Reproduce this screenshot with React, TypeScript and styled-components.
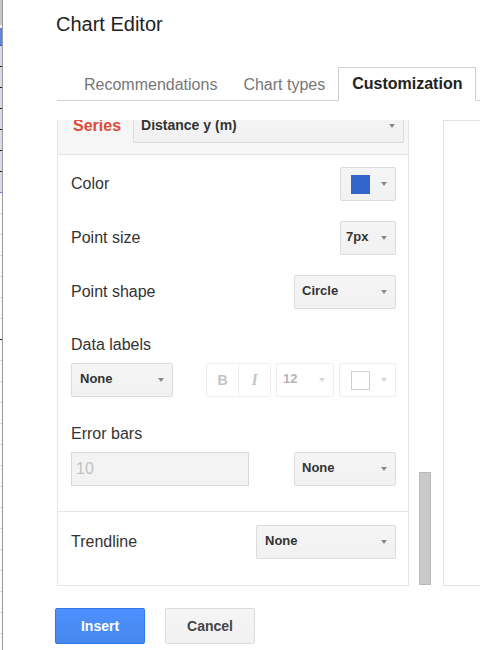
import React from "react";
import styled, { createGlobalStyle } from "styled-components";

const GlobalStyle = createGlobalStyle`
  *, *::before, *::after { box-sizing: border-box; }
  html, body { margin: 0; padding: 0; background: #fff; overflow: hidden; }
  body { font-family: "Liberation Sans", Arial, sans-serif; }
`;

const Page = styled.div`
  display: flex;
  width: 480px;
  height: 650px;
  overflow: hidden;
`;

/* sliver of the spreadsheet behind the dialog */
const Sheet = styled.div`
  width: 3px;
  flex-shrink: 0;
  display: flex;
  flex-direction: column;
  border-right: 1px solid #9c9c9c;
  overflow: hidden;
`;

const SheetCell = styled.div<{ $h: number; $bg: string; $line?: string }>`
  flex-shrink: 0;
  height: ${(p) => p.$h}px;
  background: ${(p) => p.$bg};
  border-bottom: 1px solid ${(p) => p.$line ?? p.$bg};
`;

const Dialog = styled.div`
  flex: 1;
  min-width: 0;
  display: flex;
  flex-direction: column;
  padding-left: 52px;
  overflow: hidden;
`;

const Title = styled.h1`
  margin: 0;
  padding: 12px 0 0 1px;
  font-size: 20px;
  line-height: 24px;
  font-weight: normal;
  color: #222;
`;

const TabBar = styled.div`
  display: flex;
  height: 34px;
  margin: 31px 0 0 2px;
  padding-left: 14px;
  border-bottom: 1px solid #cfcfcf;
`;

const Tab = styled.div<{ $active?: boolean }>`
  display: flex;
  align-items: center;
  height: 34px;
  padding: 0 ${(p) => (p.$active ? "13px" : "12px")};
  font-size: 16px;
  white-space: nowrap;
  border: 1px solid ${(p) => (p.$active ? "#cfcfcf" : "transparent")};
  border-bottom: ${(p) => (p.$active ? "1px solid #fff" : "none")};
  background: ${(p) => (p.$active ? "#fff" : "transparent")};
  color: ${(p) => (p.$active ? "#222" : "#777")};
  font-weight: ${(p) => (p.$active ? "bold" : "normal")};
`;

const Workspace = styled.div`
  display: flex;
  height: 466px;
  margin: 19px 0 0 2px;
`;

const ScrollViewport = styled.div`
  width: 352px;
  flex-shrink: 0;
  height: 466px;
  overflow: hidden;
`;

const ScrollContent = styled.div<{ $offset: number }>`
  margin-top: ${(p) => -p.$offset}px;
`;

const SeriesHeader = styled.div`
  display: flex;
  align-items: center;
  gap: 12px;
  padding: 12px 4px 11px 15px;
  background: #f6f6f6;
  border-left: 1px solid #e5e5e5;
  border-right: 1px solid #e5e5e5;
`;

const SeriesLabel = styled.span`
  font-size: 16px;
  font-weight: bold;
  color: #dd4b39;
`;

const SettingsPanel = styled.div`
  border: 1px solid #e5e5e5;
  background: #fff;
`;

const Section = styled.div<{ $divider?: boolean }>`
  display: flex;
  flex-direction: column;
  padding: ${(p) => (p.$divider ? "12px 12px 25px 13px" : "13px 12px 26px 13px")};
  border-bottom: ${(p) => (p.$divider ? "1px solid #e5e5e5" : "none")};
`;

const Row = styled.div<{ $gap?: number }>`
  display: flex;
  align-items: center;
  justify-content: space-between;
  margin-top: ${(p) => p.$gap ?? 0}px;
`;

const Label = styled.div<{ $gap?: number }>`
  font-size: 16px;
  line-height: 18px;
  color: #333;
  margin-top: ${(p) => p.$gap ?? 0}px;
`;

const Select = styled.div<{ $w?: number; $pl?: number; $size?: number }>`
  display: flex;
  align-items: center;
  justify-content: space-between;
  width: ${(p) => (p.$w ? `${p.$w}px` : "auto")};
  flex: ${(p) => (p.$w ? "0 0 auto" : "1")};
  height: 34px;
  padding: 0 8px 0 ${(p) => p.$pl ?? 7}px;
  background: linear-gradient(#f5f5f5, #f1f1f1);
  border: 1px solid #dcdcdc;
  border-radius: 2px;
  font-size: ${(p) => p.$size ?? 13}px;
  font-weight: bold;
  color: #333;
`;

const SelectText = styled.span`
  margin-top: -3px;
  white-space: nowrap;
`;

const Caret = styled.span<{ $muted?: boolean }>`
  width: 0;
  height: 0;
  border-left: 3.5px solid transparent;
  border-right: 3.5px solid transparent;
  border-top: 4px solid ${(p) => (p.$muted ? "#d6d6d6" : "#8a8a8a")};
`;

const Swatch = styled.span<{ $color: string; $outline?: boolean }>`
  width: 19px;
  height: 19px;
  margin-left: 3px;
  background: ${(p) => p.$color};
  border: ${(p) => (p.$outline ? "1px solid #cfcfcf" : "none")};
`;

const Tools = styled.div`
  display: flex;
  gap: 5px;
`;

const ToggleGroup = styled.div`
  display: flex;
  width: 65px;
  height: 34px;
  border: 1px solid #f0f0f0;
  border-radius: 2px;
`;

const Toggle = styled.span<{ $italic?: boolean }>`
  flex: 1;
  display: flex;
  align-items: center;
  justify-content: center;
  color: #c4c4c4;
  font-weight: bold;
  font-size: ${(p) => (p.$italic ? 16 : 14)}px;
  font-style: ${(p) => (p.$italic ? "italic" : "normal")};
  font-family: ${(p) =>
    p.$italic ? '"Liberation Serif", "Times New Roman", serif' : "inherit"};
  & + & {
    border-left: 1px solid #f0f0f0;
  }
`;

const MutedSelect = styled(Select)`
  background: #fff;
  border-color: #eeeeee;
  color: #b4b4b4;
  font-weight: bold;
`;

const TextInput = styled.div`
  display: flex;
  align-items: center;
  width: 178px;
  height: 34px;
  padding-left: 4px;
  background: #f3f3f3;
  border: 1px solid #d9d9d9;
  font-size: 16px;
  color: #c2c2c2;
`;

const ScrollTrack = styled.div`
  width: 34px;
  flex-shrink: 0;
  display: flex;
  flex-direction: column;
  justify-content: flex-end;
  padding: 0 0 1px 10px;
`;

const ScrollThumb = styled.div`
  width: 12px;
  height: 113px;
  background: #c9c9c9;
  border: 1px solid #b9b9b9;
`;

const Preview = styled.div`
  width: 300px;
  flex-shrink: 0;
  height: 466px;
  border: 1px solid #e2e2e2;
`;

const Footer = styled.div`
  display: flex;
  gap: 20px;
  margin-top: 22px;
`;

const Button = styled.button<{ $primary?: boolean }>`
  width: 90px;
  height: 36px;
  font-family: inherit;
  font-size: 14px;
  font-weight: bold;
  border-radius: 2px;
  padding: 0;
  color: ${(p) => (p.$primary ? "#fff" : "#444")};
  background: ${(p) =>
    p.$primary
      ? "linear-gradient(#4d90fe, #4787ed)"
      : "linear-gradient(#f5f5f5, #f1f1f1)"};
  border: 1px solid ${(p) => (p.$primary ? "#3079ed" : "#dcdcdc")};
`;

const sheetRows = [
  { h: 25, bg: "#c6c6c6" },
  { h: 3, bg: "#eef0f4" },
  { h: 18, bg: "#5b88d8", line: "#2f5fb8" },
  ...Array.from({ length: 6 }, () => ({ h: 21, bg: "#d6dce7", line: "#1e1e1e" })),
  { h: 21, bg: "#d6dce7", line: "#5b88d8" },
  ...Array.from({ length: 23 }, (_, i) => ({
    h: 21,
    bg: "#fafafa",
    line: i === 6 ? "#1e1e1e" : "#dadada",
  })),
];

export default function App() {
  return (
    <>
      <GlobalStyle />
      <Page>
        <Sheet>
          {sheetRows.map((r, i) => (
            <SheetCell key={i} $h={r.h} $bg={r.bg} $line={r.line} />
          ))}
        </Sheet>
        <Dialog>
          <Title>Chart Editor</Title>
          <TabBar>
            <Tab>Recommendations</Tab>
            <Tab>Chart types</Tab>
            <Tab $active>Customization</Tab>
          </TabBar>
          <Workspace>
            <ScrollViewport>
              <ScrollContent $offset={23}>
                <SeriesHeader>
                  <SeriesLabel>Series</SeriesLabel>
                  <Select $size={14} $pl={7}>
                    <SelectText>Distance y (m)</SelectText>
                    <Caret />
                  </Select>
                </SeriesHeader>
                <SettingsPanel>
                  <Section $divider>
                    <Row>
                      <Label>Color</Label>
                      <Select $w={56} $pl={7}>
                        <Swatch $color="#3366cc" />
                        <Caret />
                      </Select>
                    </Row>
                    <Row $gap={20}>
                      <Label>Point size</Label>
                      <Select $w={56} $pl={5}>
                        <SelectText>7px</SelectText>
                        <Caret />
                      </Select>
                    </Row>
                    <Row $gap={20}>
                      <Label>Point shape</Label>
                      <Select $w={102} $pl={7}>
                        <SelectText>Circle</SelectText>
                        <Caret />
                      </Select>
                    </Row>
                    <Label $gap={27}>Data labels</Label>
                    <Row $gap={9}>
                      <Select $w={102} $pl={8}>
                        <SelectText>None</SelectText>
                        <Caret />
                      </Select>
                      <Tools>
                        <ToggleGroup>
                          <Toggle>B</Toggle>
                          <Toggle $italic>I</Toggle>
                        </ToggleGroup>
                        <MutedSelect $w={58} $pl={6}>
                          <SelectText>12</SelectText>
                          <Caret $muted />
                        </MutedSelect>
                        <MutedSelect $w={57} $pl={8}>
                          <Swatch $color="#fff" $outline />
                          <Caret $muted />
                        </MutedSelect>
                      </Tools>
                    </Row>
                    <Label $gap={28}>Error bars</Label>
                    <Row $gap={9}>
                      <TextInput>10</TextInput>
                      <Select $w={102} $pl={7}>
                        <SelectText>None</SelectText>
                        <Caret />
                      </Select>
                    </Row>
                  </Section>
                  <Section>
                    <Row>
                      <Label>Trendline</Label>
                      <Select $w={140} $pl={8}>
                        <SelectText>None</SelectText>
                        <Caret />
                      </Select>
                    </Row>
                  </Section>
                </SettingsPanel>
              </ScrollContent>
            </ScrollViewport>
            <ScrollTrack>
              <ScrollThumb />
            </ScrollTrack>
            <Preview />
          </Workspace>
          <Footer>
            <Button $primary>Insert</Button>
            <Button>Cancel</Button>
          </Footer>
        </Dialog>
      </Page>
    </>
  );
}
